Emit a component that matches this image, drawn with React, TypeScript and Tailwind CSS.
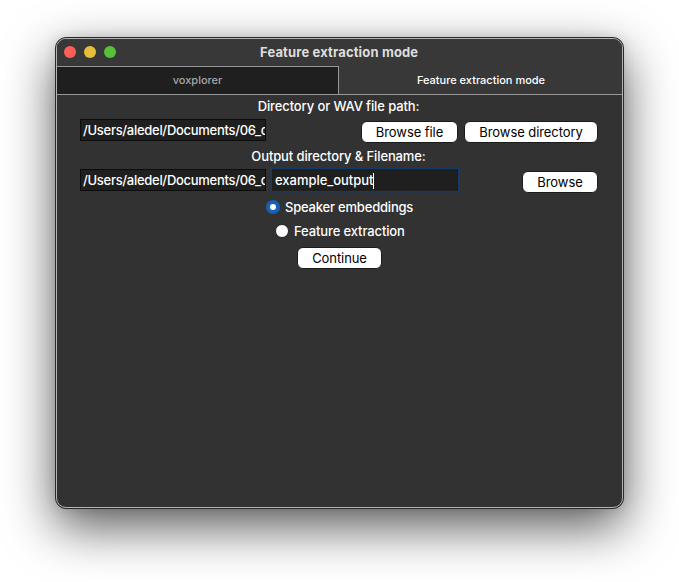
import type { ReactNode } from 'react';

function PushButton({ children, className }: { children: ReactNode; className: string }) {
  return (
    <button
      className={`flex h-[22px] shrink-0 items-center justify-center rounded-[6px] border border-[#1b1b1b] bg-white pb-px text-[13px] leading-4 font-normal tracking-[-0.08px] text-black ${className}`}
    >
      <span className="whitespace-nowrap">{children}</span>
    </button>
  );
}

function PathField() {
  return (
    <div className="h-[22px] w-[186px] shrink-0 overflow-hidden border border-[#0c0c0c] bg-[#1f1f1f] pl-[2px] text-[13px] leading-[21px] font-medium whitespace-nowrap">
      <span className="tracking-[-0.29px]">/Users/aledel/Documents/06_c</span>
    </div>
  );
}

export default function App() {
  return (
    <div className="h-[582px] w-[679px] overflow-hidden bg-white pt-[37px] pl-[55px] font-['Inter','Liberation_Sans',sans-serif] text-white">
      <div className="h-[472px] w-[569px] rounded-[11px] border border-[#2a2a2a] bg-[#323232] shadow-[0_18px_50px_rgba(0,0,0,0.65),0_0_12px_rgba(0,0,0,0.12)]">
        <div className="flex h-[470px] w-[567px] flex-col overflow-hidden rounded-[10px] border border-[#b4b4b4]">
          <header className="flex h-[27px] shrink-0 items-center bg-[#383838] pb-[2px] pl-[7px]">
            <div className="flex w-[196px] gap-2">
              <i className="size-3 rounded-full bg-[#ff5f57]" />
              <i className="size-3 rounded-full bg-[#e5bf3c]" />
              <i className="size-3 rounded-full bg-[#57c038]" />
            </div>
            <h1 className="text-[13px] leading-4 font-bold tracking-[0.15px] text-[#dedede]">Feature extraction mode</h1>
          </header>
          <nav className="flex h-[29px] shrink-0 border-b border-[#979797] bg-[#383838] text-[11px] leading-[27px]">
            <div className="w-[282px] border-t border-r border-[#979797] bg-[#1f1f1f] text-center font-medium text-[#a5a5a5]">
              voxplorer
            </div>
            <div className="w-[283px] pt-px pl-px text-center font-medium">Feature extraction mode</div>
          </nav>
          <main className="flex flex-col px-[23px] text-[13px] font-medium">
            <p className="mt-[3px] h-[17px] pr-[2px] text-center leading-[17px] tracking-[-0.12px]">Directory or WAV file path:</p>
            <div className="mt-1 flex h-6 w-[518px] items-start">
              <PathField />
              <div className="mt-[2px] ml-auto flex gap-[6px]">
                <PushButton className="w-[97px]">Browse file</PushButton>
                <PushButton className="w-[134px]">Browse directory</PushButton>
              </div>
            </div>
            <p className="mt-[5px] h-[17px] pr-[2px] text-center leading-[17px] tracking-[-0.12px]">Output directory &amp; Filename:</p>
            <div className="mt-[3px] flex h-[25px] w-[518px] items-start">
              <div className="mt-px">
                <PathField />
              </div>
              <div className="ml-[5px] flex h-6 w-[188px] items-center border border-[#153a66] bg-[#1f1f1f] pt-px pl-[3px] shadow-[0_0_0_1px_rgba(24,58,100,0.45)]">
                <span className="tracking-[-0.03px]">example_output</span>
                <i className="h-4 w-px bg-white" />
              </div>
              <div className="mt-[3px] ml-auto">
                <PushButton className="w-[76px]">Browse</PushButton>
              </div>
            </div>
            <div className="mt-[6px] ml-[186px] flex h-4 items-center">
              <span className="flex size-[14px] items-center justify-center rounded-full bg-[#1760b7]">
                <i className="size-[6px] rounded-full bg-white" />
              </span>
              <span className="ml-[5px] leading-4 tracking-[-0.2px]">Speaker embeddings</span>
            </div>
            <div className="mt-2 ml-[195px] flex h-4 items-center">
              <span className="size-[14px] rounded-full border border-[#222] bg-white" />
              <span className="ml-[5px] leading-4 tracking-[-0.12px]">Feature extraction</span>
            </div>
            <div className="mt-2 ml-[217px]">
              <PushButton className="w-[85px]">Continue</PushButton>
            </div>
          </main>
        </div>
      </div>
    </div>
  );
}
